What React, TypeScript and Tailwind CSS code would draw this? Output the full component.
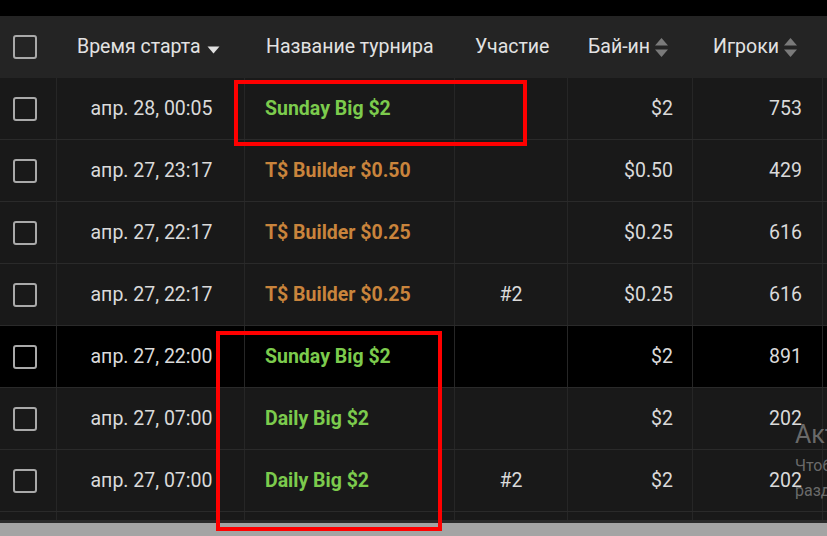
import React from 'react';

type Row = {
  time: string;
  name: string;
  kind: 'green' | 'orange';
  entry: string;
  buyin: string;
  players: string;
  hover?: boolean;
};

const rows: Row[] = [
  { time: 'апр. 28, 00:05', name: 'Sunday Big $2', kind: 'green', entry: '', buyin: '$2', players: '753' },
  { time: 'апр. 27, 23:17', name: 'T$ Builder $0.50', kind: 'orange', entry: '', buyin: '$0.50', players: '429' },
  { time: 'апр. 27, 22:17', name: 'T$ Builder $0.25', kind: 'orange', entry: '', buyin: '$0.25', players: '616' },
  { time: 'апр. 27, 22:17', name: 'T$ Builder $0.25', kind: 'orange', entry: '#2', buyin: '$0.25', players: '616' },
  { time: 'апр. 27, 22:00', name: 'Sunday Big $2', kind: 'green', entry: '', buyin: '$2', players: '891', hover: true },
  { time: 'апр. 27, 07:00', name: 'Daily Big $2', kind: 'green', entry: '', buyin: '$2', players: '202' },
  { time: 'апр. 27, 07:00', name: 'Daily Big $2', kind: 'green', entry: '#2', buyin: '$2', players: '202' },
];

function Checkbox() {
  return <div className="w-[24px] h-[24px] rounded-[3px] border-2 border-[#a9a9a9]" />;
}

function SortBoth() {
  return (
    <svg width="15" height="21" viewBox="0 0 15 21" className="ml-[4px]">
      <path d="M1 8.5 L7.5 1 L14 8.5 Z" fill="#7a7a7a" />
      <path d="M1 12.5 L7.5 20 L14 12.5 Z" fill="#7a7a7a" />
    </svg>
  );
}

function SortDown() {
  return (
    <svg width="13" height="8" viewBox="0 0 13 8" className="ml-[6px] mt-[6px]">
      <path d="M0.5 0.5 L12.5 0.5 L6.5 7.5 Z" fill="#e0e0e0" />
    </svg>
  );
}

export default function App() {
  return (
    <div
      className="relative w-[827px] h-[536px] overflow-hidden bg-black text-[#dadada]"
      style={{ fontFamily: 'Roboto, "Noto Sans", sans-serif' }}
    >
      <div className="h-[16px] bg-black" />

      {/* header */}
      <div className="flex h-[62px] items-center bg-[#242424] text-[19.5px] text-[#e2e2e2]">
        <div className="w-[57px] flex justify-center pr-[7px]"><Checkbox /></div>
        <div className="w-[188px] pl-[20px] flex items-center">Время старта<SortDown /></div>
        <div className="w-[210px] pl-[21px]">Название турнира</div>
        <div className="w-[113px] pl-[20px]">Участие</div>
        <div className="w-[125px] pl-[20px] flex items-center">Бай-ин<SortBoth /></div>
        <div className="w-[130px] pl-[20px] flex items-center">Игроки<SortBoth /></div>
      </div>

      {/* body */}
      <div className="text-[19.5px]">
        {rows.map((r, i) => (
          <div
            key={i}
            className={`flex h-[62px] border-b border-[#2a2a2a] ${r.hover ? 'bg-black' : 'bg-[#191919]'}`}
          >
            <div className="w-[57px] shrink-0 border-r border-[#262626] flex items-center justify-center pr-[7px]">
              <Checkbox />
            </div>
            <div className="w-[188px] shrink-0 border-r border-[#262626] flex items-center justify-center pl-[2px]">
              {r.time}
            </div>
            <div
              className={`w-[210px] shrink-0 border-r border-[#262626] flex items-center pl-[20px] font-bold ${
                r.kind === 'green' ? 'text-[#7ccb4d]' : 'text-[#c9843c]'
              }`}
            >
              {r.name}
            </div>
            <div className="w-[113px] shrink-0 border-r border-[#262626] flex items-center justify-center">
              {r.entry}
            </div>
            <div className="w-[125px] shrink-0 border-r border-[#262626] flex items-center justify-end pr-[19px]">
              {r.buyin}
            </div>
            <div className="w-[130px] shrink-0 border-r border-[#262626] flex items-center justify-end pr-[20px]">
              {r.players}
            </div>
            <div className="flex-1" />
          </div>
        ))}
        {/* partial next row */}
        <div className="flex h-[11px] bg-[#191919] border-b-[3px] border-[#2a2a2a]">
          <div className="w-[57px] shrink-0 border-r border-[#262626]" />
          <div className="w-[188px] shrink-0 border-r border-[#262626]" />
          <div className="w-[210px] shrink-0 border-r border-[#262626]" />
          <div className="w-[113px] shrink-0 border-r border-[#262626]" />
          <div className="w-[125px] shrink-0 border-r border-[#262626]" />
          <div className="w-[130px] shrink-0 border-r border-[#262626]" />
        </div>
      </div>

      {/* scrollbar strip */}
      <div className="h-[20px] bg-[#a4a4a4]" />

      {/* windows activation watermark */}
      <div className="absolute left-[795px] top-[422px] text-[#808080]/80 leading-none whitespace-nowrap">
        <div className="text-[25px]">Активация Windows</div>
        <div className="mt-[6px] text-[16px] leading-[25px]">Чтобы активировать Windows, перейдите в<br />раздел "Параметры".</div>
      </div>

      {/* red annotation boxes */}
      <div className="absolute left-[234px] top-[80px] w-[293px] h-[66px] border-[4px] border-[#ff0000]" />
      <div className="absolute left-[216px] top-[331px] w-[226px] h-[200px] border-[4px] border-[#ff0000]" />
    </div>
  );
}
